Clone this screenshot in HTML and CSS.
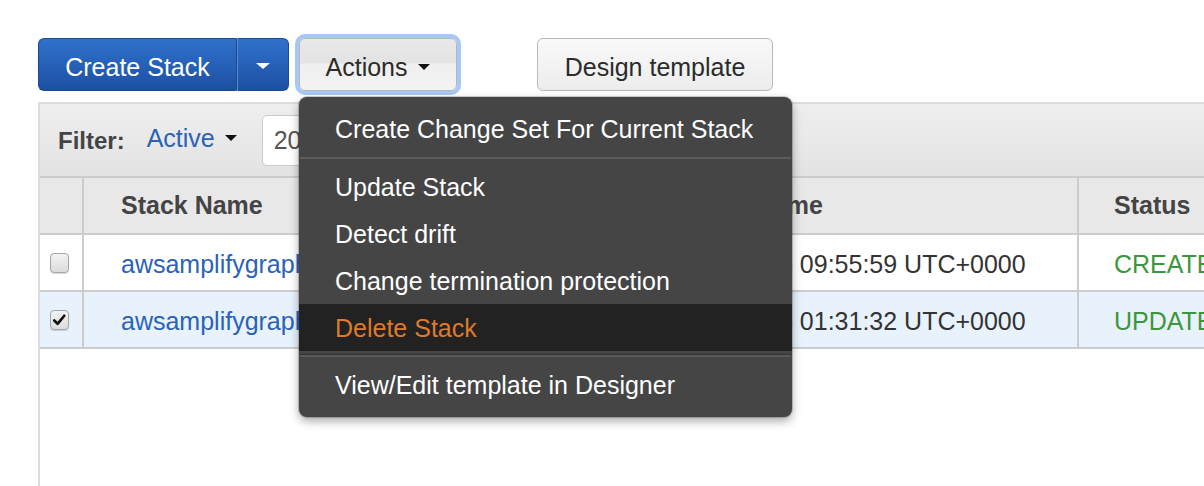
FILE: index.html
```html
<!DOCTYPE html>
<html>
<head>
<meta charset="utf-8">
<link rel="stylesheet" href="styles.css">
</head>
<body>
<div class="toolbar">
  <div class="btn-group">
    <button class="btn-primary main">Create Stack</button>
    <button class="btn-primary split"><span class="caret caret-white"></span></button>
  </div>
  <div class="dropdown">
    <button class="btn btn-actions">Actions <span class="caret"></span></button>
    <ul class="menu">
      <li class="item">Create Change Set For Current Stack</li>
      <li class="divider"></li>
      <li class="item">Update Stack</li>
      <li class="item">Detect drift</li>
      <li class="item">Change termination protection</li>
      <li class="item danger">Delete Stack</li>
      <li class="divider divider-low"></li>
      <li class="item">View/Edit template in Designer</li>
    </ul>
  </div>
  <button class="btn btn-design">Design template</button>
</div>

<div class="panel">
  <div class="filterbar">
    <span class="filter-label">Filter:</span>
    <span class="filter-select">Active <span class="caret"></span></span>
    <div class="filter-input">2019</div>
  </div>
  <div class="row head">
    <div class="cell c-check"></div>
    <div class="cell c-name">Stack Name</div>
    <div class="cell c-time">Created Time</div>
    <div class="cell c-status">Status</div>
  </div>
  <div class="row data">
    <div class="cell c-check"><span class="checkbox"></span></div>
    <div class="cell c-name"><a class="link">awsamplifygraphqlapi-dev</a></div>
    <div class="cell c-time">2019-04-05 09:55:59 UTC+0000</div>
    <div class="cell c-status ok">CREATE_COMPLETE</div>
  </div>
  <div class="row data selected">
    <div class="cell c-check"><span class="checkbox checked"><svg viewBox="0 0 20 20" width="19" height="20"><path d="M4.5 10.5 L8 14 L15 5.5" fill="none" stroke="#111" stroke-width="2.8" stroke-linecap="round" stroke-linejoin="round"/></svg></span></div>
    <div class="cell c-name"><a class="link">awsamplifygraphqlapi-prod</a></div>
    <div class="cell c-time">2019-04-06 01:31:32 UTC+0000</div>
    <div class="cell c-status ok">UPDATE_COMPLETE</div>
  </div>
</div>
</body>
</html>
```

FILE: styles.css
```css
html, body {
  margin: 0;
  padding: 0;
  background: #fff;
  overflow: hidden;
}
body {
  font-family: "Liberation Sans", Arial, sans-serif;
  font-size: 25px;
  color: #333;
  width: 1204px;
  height: 486px;
}
button {
  font-family: inherit;
  font-size: 25px;
  margin: 0;
  cursor: pointer;
}

.toolbar {
  display: flex;
  align-items: center;
  padding: 38px 0 0 38px;
  height: 53px;
}
.btn-group {
  display: flex;
  height: 53px;
}
.btn-primary {
  height: 53px;
  color: #fff;
  background: linear-gradient(to bottom, #2f71cb 0%, #2661b8 50%, #1d4fa2 100%);
  border: 1px solid #1a4a95;
  display: flex;
  align-items: center;
  justify-content: center;
  padding: 5px 0 0;
}
.main {
  width: 199px;
  border-radius: 6px 0 0 6px;
  border-right: 1px solid #1a4890;
}
.split {
  width: 52px;
  border-radius: 0 6px 6px 0;
  border-left: 1px solid #5b8bd4;
  padding-top: 0;
}
.caret {
  display: inline-block;
  width: 0;
  height: 0;
  border-left: 6px solid transparent;
  border-right: 6px solid transparent;
  border-top: 6px solid #111;
  vertical-align: middle;
  position: relative;
  top: -2px;
}
.caret-white {
  border-top-color: #fff;
  border-left-width: 7px;
  border-right-width: 7px;
  top: 1px;
}

.dropdown {
  position: relative;
  margin-left: 10px;
}
.btn {
  height: 53px;
  border: 1px solid #b8b8b8;
  border-radius: 6px;
  color: #2b2b2b;
  padding: 5px 0 0;
}
.btn-actions {
  width: 158px;
  background: linear-gradient(to bottom, #e9e9e9 0%, #e3e3e3 47%, #efefef 49%, #f3f3f3 100%);
  box-shadow: 0 0 0 4px #a5c8f4;
}
.btn-actions .caret {
  margin-left: 4px;
}
.btn-design {
  width: 236px;
  margin-left: 80px;
  background: linear-gradient(to bottom, #f9f9f9 0%, #ececec 100%);
}

.menu {
  position: absolute;
  left: 0;
  top: 59px;
  width: 493px;
  margin: 0;
  padding: 8px 0 9px;
  list-style: none;
  background: #454545;
  border-radius: 8px;
  box-shadow: 0 0 0 1px rgba(0, 0, 0, 0.18), 0 4px 10px rgba(0, 0, 0, 0.35);
  z-index: 10;
}
.item {
  height: 47px;
  display: flex;
  align-items: center;
  padding: 1px 36px 0;
  box-sizing: border-box;
  color: #fff;
  white-space: nowrap;
}
.item.danger {
  background: #222;
  color: #de7a2c;
}
.divider {
  height: 2px;
  background: #5c5c5c;
  margin: 5px 1px 4px;
}
.divider-low {
  margin: 3px 1px 4px;
  border-top: 1px solid #333;
  background: #5a5a5a;
}

.panel {
  margin: 11px 0 0 38px;
  width: 1400px;
  height: 400px;
  border-left: 2px solid #dcdcdc;
  border-top: 2px solid #dcdcdc;
}
.filterbar {
  height: 72px;
  display: flex;
  align-items: center;
  padding-left: 18px;
  background: linear-gradient(to bottom, #eeeeee 0%, #e3e3e3 100%);
  border-bottom: 2px solid #cccccc;
}
.filter-label {
  font-weight: bold;
  font-size: 24px;
  color: #444;
  margin-right: 22px;
  position: relative;
  top: 1px;
}
.filter-select {
  color: #2a62b8;
  position: relative;
  top: -2px;
}
.filter-select .caret {
  margin-left: 3px;
}
.filter-input {
  margin-left: 25px;
  width: 500px;
  height: 51px;
  box-sizing: border-box;
  background: #fff;
  border: 1px solid #cacaca;
  border-radius: 5px;
  padding-left: 11px;
  display: flex;
  align-items: center;
  color: #555;
}

.row {
  display: flex;
  height: 57px;
  box-sizing: border-box;
  border-bottom: 2px solid #cccccc;
  background: #fff;
}
.row.head {
  height: 57px;
  background: #e8e8e8;
  font-weight: bold;
  color: #444;
}
.row.data .cell {
  padding-top: 3px;
}
.row.data .c-check {
  padding-top: 1px;
}
.row.selected {
  background: #e8f2fc;
}
.cell {
  display: flex;
  align-items: center;
  border-right: 2px solid #cccccc;
  white-space: nowrap;
  overflow: hidden;
  box-sizing: border-box;
}
.c-check {
  width: 44px;
  padding-left: 10px;
}
.c-name {
  width: 545px;
  padding-left: 37px;
}
.c-time {
  width: 450px;
  padding-left: 36px;
}
.c-status {
  width: 300px;
  padding-left: 35px;
  border-right: none;
}
.ok {
  color: #3d963b;
}
.link {
  color: #2a62b8;
  text-decoration: none;
}
.checkbox {
  display: block;
  width: 19px;
  height: 20px;
  box-sizing: border-box;
  border: 1px solid #a5a5a5;
  border-radius: 4px;
  background: linear-gradient(to bottom, #f2f2f2 0%, #dcdcdc 100%);
  box-shadow: 0 1px 1px rgba(0, 0, 0, 0.15);
  position: relative;
}
.checkbox svg {
  position: absolute;
  left: -1px;
  top: -1px;
}
```
